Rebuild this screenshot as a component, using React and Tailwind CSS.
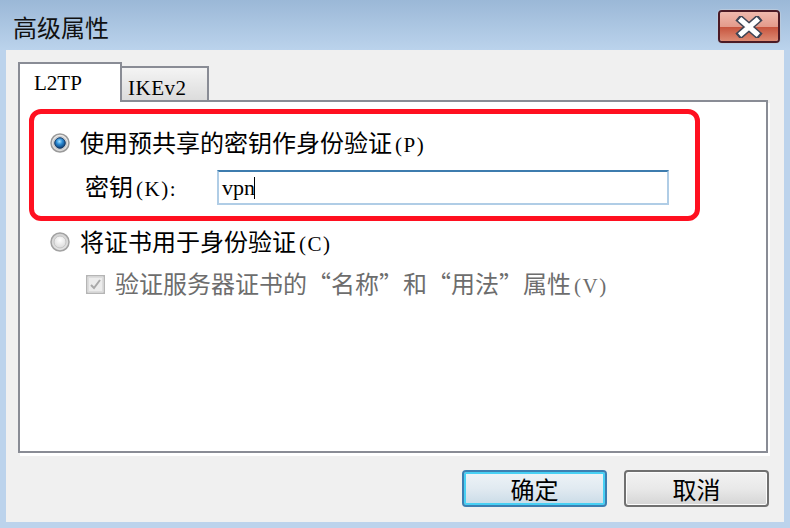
import React from "react";

const CJK = { fontFamily: '"Noto Sans CJK SC", "Noto Sans", sans-serif' };
const SER = { fontFamily: '"Liberation Serif", "DejaVu Serif", serif' };

function A({ children }) {
  return (
    <span className="text-[21px] ml-[3px] tracking-[1.5px]" style={SER}>
      {children}
    </span>
  );
}

function RadioOn() {
  return (
    <svg width="20" height="20" viewBox="0 0 20 20">
      <defs>
        <radialGradient id="rg1" cx="50%" cy="40%" r="60%">
          <stop offset="0" stopColor="#ffffff" />
          <stop offset="1" stopColor="#d6d6d6" />
        </radialGradient>
        <radialGradient id="rb1" cx="45%" cy="35%" r="65%">
          <stop offset="0" stopColor="#a6e1ff" />
          <stop offset="0.45" stopColor="#2a8ad4" />
          <stop offset="1" stopColor="#0d3a6e" />
        </radialGradient>
      </defs>
      <circle cx="10" cy="10" r="9" fill="url(#rg1)" stroke="#9a9a9a" strokeWidth="1.5" />
      <circle cx="10" cy="10" r="6.6" fill="none" stroke="#c9c9c9" strokeWidth="1" />
      <circle cx="10" cy="10" r="5.3" fill="url(#rb1)" stroke="#173b66" strokeWidth="1" />
    </svg>
  );
}

function RadioOff() {
  return (
    <svg width="20" height="20" viewBox="0 0 20 20">
      <defs>
        <radialGradient id="rg2" cx="50%" cy="60%" r="60%">
          <stop offset="0" stopColor="#f6f6f6" />
          <stop offset="1" stopColor="#cfcfcf" />
        </radialGradient>
        <radialGradient id="rg3" cx="50%" cy="35%" r="70%">
          <stop offset="0" stopColor="#ffffff" />
          <stop offset="1" stopColor="#d8d8d8" />
        </radialGradient>
      </defs>
      <circle cx="10" cy="10" r="9" fill="url(#rg2)" stroke="#a2a2a2" strokeWidth="1.5" />
      <circle cx="10" cy="10" r="6" fill="url(#rg3)" stroke="#c4c4c4" strokeWidth="1" />
    </svg>
  );
}

function CheckDisabled() {
  return (
    <svg width="19" height="19" viewBox="0 0 19 19">
      <rect x="0.75" y="0.75" width="17.5" height="17.5" fill="#f4f4f4" stroke="#b5b5b5" strokeWidth="1.5" />
      <rect x="2.5" y="2.5" width="14" height="14" fill="#ececec" stroke="#dcdcdc" strokeWidth="1" />
      <path d="M5 10 L8 13 L14 5" fill="none" stroke="#a9a9a9" strokeWidth="2" />
    </svg>
  );
}

function CloseButton() {
  return (
    <div className="w-[62px] h-[33px] rounded-[4px] border-[2px] border-[#4b1a25] overflow-hidden flex flex-col relative shadow-[0_0_0_1px_#b8c9dc]">
      <div className="h-1/2 bg-gradient-to-b from-[#efb9ad] to-[#e39a8a]" />
      <div className="h-1/2 bg-gradient-to-b from-[#c6533d] to-[#dc8a73]" />
      <div className="absolute inset-0 flex items-center justify-center">
        <svg width="30" height="22" viewBox="0 0 30 22">
          <path d="M7 4 L23 18 M23 4 L7 18" stroke="#3f4656" strokeWidth="8" strokeLinecap="square" />
          <path d="M7.5 4.5 L22.5 17.5 M22.5 4.5 L7.5 17.5" stroke="#ffffff" strokeWidth="5" strokeLinecap="square" />
        </svg>
      </div>
    </div>
  );
}

export default function App() {
  return (
    <div lang="zh-CN" className="w-[790px] h-[528px] bg-[#bcd3ec] flex flex-col overflow-hidden" style={CJK}>
      {/* title bar */}
      <div className="h-[50px] bg-gradient-to-b from-[#9bb8d7] to-[#bbd3ec] flex items-start justify-between pl-[13px] pr-[10px]">
        <div className="text-[24px] leading-[24px] text-[#111] mt-[15px]">高级属性</div>
        <div className="mt-[10px]">
          <CloseButton />
        </div>
      </div>

      {/* client area */}
      <div className="flex-1 mx-[6px] mb-[6px] bg-[#f0f0f0] flex flex-col pl-[12px] pr-[16px] pt-[12px]">
        {/* tabs */}
        <div className="flex items-end h-[38px] relative z-10">
          <div className="w-[104px] h-[40px] -mb-[2px] bg-white border-[2px] border-b-0 border-[#898c95] flex items-start pl-[14px] pt-[9px]">
            <span className="text-[21px] leading-[20px] text-black" style={SER}>L2TP</span>
          </div>
          <div className="w-[87px] h-[34px] border-t-[2px] border-r-[2px] border-[#898c95] bg-gradient-to-b from-[#f4f4f4] to-[#dcdcdc] flex items-start pl-[6px] pt-[10px]">
            <span className="text-[21px] leading-[20px] text-black tracking-[0.5px]" style={SER}>IKEv2</span>
          </div>
        </div>

        {/* panel */}
        <div className="h-[353px] bg-white border-[2px] border-[#898c95] shadow-[2px_3px_0_#ffffff] flex flex-col">
          {/* highlighted group */}
          <div className="ml-[9px] mt-[7px] w-[671px] h-[112px] border-[5px] border-[#ff1020] rounded-[12px] flex flex-col pl-[16px] pt-[15px]">
            <div className="flex items-center h-[28px] gap-[10px] text-[24px] text-black">
              <RadioOn />
              <span className="leading-[28px]">
                使用预共享的密钥作身份验证<A>(P)</A>
              </span>
            </div>
            <div className="flex items-center mt-[13px] h-[35px]">
              <span className="ml-[35px] w-[132px] text-[24px] leading-[28px] text-black">
                密钥<A>(K):</A>
              </span>
              <div className="w-[452px] h-[35px] border-[2px] border-[#b0cde6] border-t-[#3d7cae] bg-white flex items-center pl-[3px]">
                <span className="text-[22px] leading-[22px] text-black" style={SER}>vpn</span>
                <span className="w-[1px] h-[22px] bg-black -ml-[1px]" />
              </div>
            </div>
          </div>

          {/* second radio */}
          <div className="flex items-center h-[28px] mt-[7px] pl-[30px] gap-[10px] text-[24px] text-black">
            <RadioOff />
            <span className="leading-[28px]">
              将证书用于身份验证<A>(C)</A>
            </span>
          </div>

          {/* disabled checkbox */}
          <div className="flex items-center h-[28px] mt-[14px] pl-[66px] gap-[10px] text-[24px] text-[#6d6d6d]">
            <CheckDisabled />
            <span className="leading-[28px]">
              验证服务器证书的“名称”和“用法”属性<A>(V)</A>
            </span>
          </div>
        </div>

        {/* buttons */}
        <div className="flex justify-end gap-[17px] mt-[17px] -mr-[1px]">
          <div className="w-[145px] h-[37px] rounded-[4px] border-[2px] border-[#3c7fb1] shadow-[inset_0_0_0_2px_#48d0f4] bg-gradient-to-b from-[#eef3f7] via-[#e1eaf1] to-[#c9dbe7] flex items-center justify-center text-[24px] text-black">
            确定
          </div>
          <div className="w-[145px] h-[37px] rounded-[4px] border-[2px] border-[#707070] shadow-[inset_0_0_0_1px_#fcfcfc] bg-gradient-to-b from-[#f2f2f2] via-[#e9e9e9] to-[#d5d5d5] flex items-center justify-center text-[24px] text-black">
            取消
          </div>
        </div>
      </div>
    </div>
  );
}
